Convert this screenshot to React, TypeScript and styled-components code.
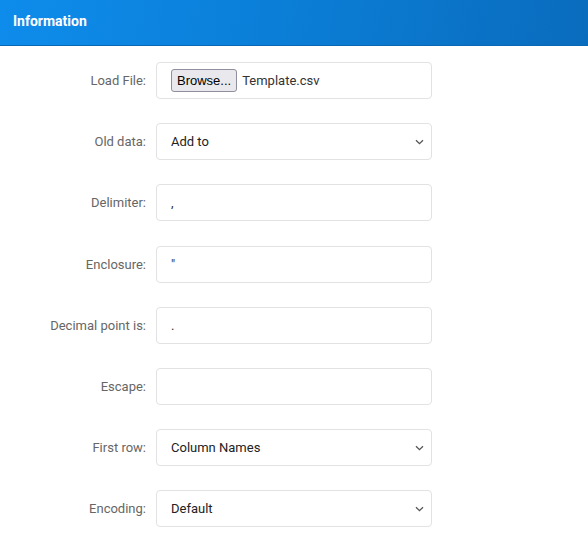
import React from 'react';
import styled, { createGlobalStyle } from 'styled-components';

const GlobalStyle = createGlobalStyle`
  html, body {
    margin: 0;
    padding: 0;
    background: #fff;
  }
  body {
    font-family: Roboto, "Liberation Sans", sans-serif;
  }
`;

const Panel = styled.div`
  width: 588px;
  background: #fff;
`;

const Header = styled.div`
  height: 46px;
  box-sizing: border-box;
  padding: 0 13px 4px;
  display: flex;
  align-items: center;
  background: linear-gradient(100deg, #0e8ceb 0%, #0b7fd8 45%, #0a6cbd 100%);
  border-bottom: 1px solid #0a67b4;
  color: #fff;
  font-size: 14px;
  font-weight: 700;
`;

const Form = styled.div`
  display: grid;
  grid-template-columns: 146px 276px;
  column-gap: 10px;
  row-gap: 24.2px;
  padding-top: 16px;
`;

const Label = styled.label`
  text-align: right;
  align-self: center;
  font-size: 13px;
  color: #666;
`;

const Field = styled.div<{ select?: boolean }>`
  height: 37px;
  box-sizing: border-box;
  border: 1px solid #e2e2e2;
  border-radius: 4px;
  padding: 0 ${p => (p.select ? 7 : 14)}px 0 14px;
  display: flex;
  align-items: center;
  gap: 5px;
  font-size: 13px;
  color: ${p => (p.select ? '#222' : '#333')};
`;

const Value = styled.span`
  flex: 1;
`;

const BrowseButton = styled.span`
  display: inline-flex;
  align-items: center;
  height: 23px;
  box-sizing: border-box;
  padding: 0 5px;
  border: 1px solid #8f8f9d;
  border-radius: 3px;
  background: #e9e9ed;
  color: #000;
  font-family: "Liberation Sans", sans-serif;
  font-size: 13px;
`;

const Chevron = () => (
  <svg width="9" height="6" viewBox="0 0 9 6">
    <path d="M1 1.2l3.5 3.5 3.5-3.5" fill="none" stroke="#555" strokeWidth="1.3" />
  </svg>
);

const rows: { label: string; value: string; select?: boolean }[] = [
  { label: 'Old data:', value: 'Add to', select: true },
  { label: 'Delimiter:', value: ',' },
  { label: 'Enclosure:', value: '"' },
  { label: 'Decimal point is:', value: '.' },
  { label: 'Escape:', value: '' },
  { label: 'First row:', value: 'Column Names', select: true },
  { label: 'Encoding:', value: 'Default', select: true },
];

export default function App() {
  return (
    <>
      <GlobalStyle />
      <Panel>
        <Header>Information</Header>
        <Form>
          <Label>Load File:</Label>
          <Field>
            <BrowseButton>Browse...</BrowseButton>
            <Value>Template.csv</Value>
          </Field>
          {rows.map(r => (
            <React.Fragment key={r.label}>
              <Label>{r.label}</Label>
              <Field select={r.select}>
                <Value>{r.value}</Value>
                {r.select && <Chevron />}
              </Field>
            </React.Fragment>
          ))}
        </Form>
      </Panel>
    </>
  );
}
